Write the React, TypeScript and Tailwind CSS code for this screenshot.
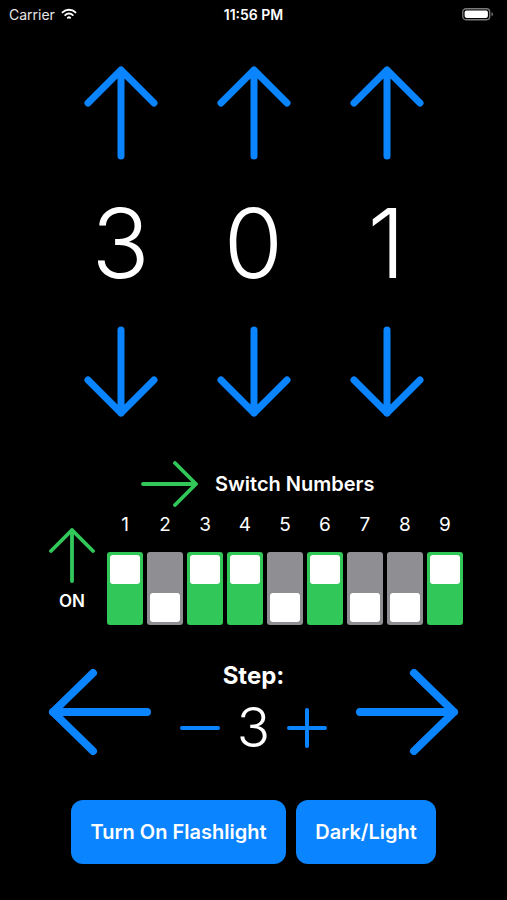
import React from 'react';

const BLUE = '#0a84ff';
const GREEN = '#32c859';

const font = { fontFamily: 'Inter, "Noto Sans", sans-serif' };

function UpArrow() {
  return (
    <svg width="78" height="96" viewBox="0 0 78 96" fill="none" stroke={BLUE} strokeWidth="7" strokeLinecap="round" strokeLinejoin="round">
      <path d="M39 6 L39 92 M6 39 L39 6 L72 39" />
    </svg>
  );
}

function DownArrow() {
  return (
    <svg width="78" height="92" viewBox="0 0 78 92" fill="none" stroke={BLUE} strokeWidth="7" strokeLinecap="round" strokeLinejoin="round">
      <path d="M39 4 L39 87 M6 54 L39 87 L72 54" />
    </svg>
  );
}

function BigSideArrow({ dir }: { dir: 'left' | 'right' }) {
  return (
    <svg width="104" height="86" viewBox="0 0 104 86" fill="none" stroke={BLUE} strokeWidth="8" strokeLinecap="round" strokeLinejoin="round">
      {dir === 'left' ? (
        <path d="M5 43 L99 43 M45 4 L5 43 L45 82" />
      ) : (
        <path d="M99 43 L5 43 M59 4 L99 43 L59 82" />
      )}
    </svg>
  );
}

function WifiIcon() {
  return (
    <svg width="16" height="12" viewBox="0 0 16 12" fill="none" stroke="white" strokeWidth="1.9" strokeLinecap="round">
      <path d="M1.5 4.4 A9.2 9.2 0 0 1 14.5 4.4" />
      <path d="M4.2 7.1 A5.4 5.4 0 0 1 11.8 7.1" />
      <path d="M6.9 9.8 A1.6 1.6 0 0 1 9.1 9.8" />
    </svg>
  );
}

function Battery() {
  return (
    <svg width="32" height="13" viewBox="0 0 32 13" fill="none">
      <rect x="0.75" y="0.75" width="27" height="11" rx="3.2" stroke="#7a7a7a" strokeWidth="1.3" />
      <rect x="2.6" y="2.6" width="23.3" height="7.3" rx="1.8" fill="white" />
      <path d="M29.5 4.2 Q31 4.6 31 6.25 Q31 7.9 29.5 8.3 Z" fill="#7a7a7a" />
    </svg>
  );
}

const digits = [3, 0, 1];
const switches = [true, false, true, true, false, true, false, false, true];

export default function App() {
  return (
    <div className="w-full h-[900px] bg-black text-white flex flex-col overflow-hidden" style={font}>
      {/* Status bar */}
      <div className="relative h-[28px] flex items-center px-[9px] text-[14px]">
        <div className="flex items-center gap-[6px] text-[#e6e6e6]">
          <span>Carrier</span>
          <WifiIcon />
        </div>
        <span className="absolute left-1/2 -translate-x-1/2 font-semibold">11:56 PM</span>
        <div className="ml-auto mr-[4px] flex items-center">
          <Battery />
        </div>
      </div>

      {/* Up arrows */}
      <div className="mt-[36px] flex justify-center">
        {digits.map((_, i) => (
          <div key={i} className="w-[133px] flex justify-center">
            <UpArrow />
          </div>
        ))}
      </div>

      {/* Digits */}
      <div className="mt-[35px] flex justify-center">
        {digits.map((d, i) => (
          <div key={i} className="w-[133px] text-center text-[96px] leading-none font-light">
            {d}
          </div>
        ))}
      </div>

      {/* Down arrows */}
      <div className="mt-[35px] flex justify-center">
        {digits.map((_, i) => (
          <div key={i} className="w-[133px] flex justify-center">
            <DownArrow />
          </div>
        ))}
      </div>

      {/* Switch Numbers */}
      <div className="mt-[43px] pl-[141px] flex items-center gap-[16px]">
        <svg width="58" height="46" viewBox="0 0 58 46" fill="none" stroke={GREEN} strokeWidth="3.8" strokeLinecap="round" strokeLinejoin="round">
          <path d="M2 23 L55 23 M34 2 L55 23 L34 44" />
        </svg>
        <span className="text-[20px] font-semibold">Switch Numbers</span>
      </div>

      {/* DIP switches */}
      <div className="mt-[8px] pl-[49px] flex items-start gap-[12px]">
        <div className="pt-[12px] flex flex-col items-center">
          <svg width="46" height="56" viewBox="0 0 46 56" fill="none" stroke={GREEN} strokeWidth="3.8" strokeLinecap="round" strokeLinejoin="round">
            <path d="M23 3 L23 54 M2 24 L23 3 L44 24" />
          </svg>
          <span className="mt-[8px] text-[17px] leading-[20px] font-semibold">ON</span>
        </div>
        <div className="flex flex-col">
          <div className="flex gap-[4px]">
            {switches.map((_, i) => (
              <div key={i} className="w-[36px] text-center text-[19px] leading-[20px]">
                {i + 1}
              </div>
            ))}
          </div>
          <div className="mt-[17px] flex gap-[4px]">
            {switches.map((on, i) => (
              <div
                key={i}
                className={`w-[36px] h-[73px] rounded-[3px] p-[3px] flex flex-col ${on ? 'bg-[#32c859] justify-start' : 'bg-[#8e8e93] justify-end'}`}
              >
                <div className="h-[29px] rounded-[3px] bg-white" />
              </div>
            ))}
          </div>
        </div>
      </div>

      {/* Step */}
      <div className="mt-[37px] flex justify-center items-start gap-[28px]">
        <div className="mt-[7px]">
          <BigSideArrow dir="left" />
        </div>
        <div className="flex flex-col items-center">
          <span className="text-[24px] leading-[28px] font-bold">Step:</span>
          <div className="mt-[10px] flex items-center gap-[17px]">
            <svg width="40" height="40" viewBox="0 0 40 40" fill="none" stroke={BLUE} strokeWidth="4" strokeLinecap="round">
              <path d="M2 20 L38 20" />
            </svg>
            <span className="text-[55px] leading-none font-light">3</span>
            <svg width="40" height="40" viewBox="0 0 40 40" fill="none" stroke={BLUE} strokeWidth="4" strokeLinecap="round">
              <path d="M2 20 L38 20 M20 2 L20 38" />
            </svg>
          </div>
        </div>
        <div className="mt-[7px]">
          <BigSideArrow dir="right" />
        </div>
      </div>

      {/* Buttons */}
      <div className="mt-[45px] flex justify-center gap-[10px]">
        <button className="w-[215px] h-[64px] rounded-[12px] bg-[#0a84ff] text-white text-[20px] font-semibold">
          Turn On Flashlight
        </button>
        <button className="w-[140px] h-[64px] rounded-[12px] bg-[#0a84ff] text-white text-[20px] font-semibold">
          Dark/Light
        </button>
      </div>
    </div>
  );
}
